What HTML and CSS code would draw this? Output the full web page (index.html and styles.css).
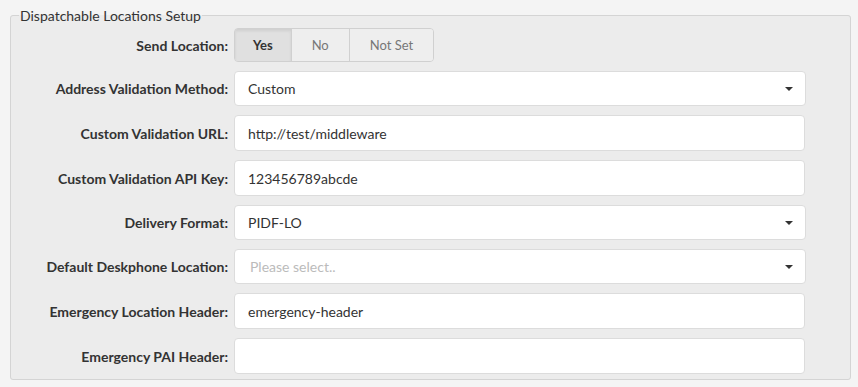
FILE: index.html
```html
<!DOCTYPE html>
<html lang="en">
<head>
    <meta charset="UTF-8">
    <meta name="viewport" content="width=device-width, initial-scale=1.0">
    <title>Dispatchable Locations Setup</title>
    <link rel="stylesheet" href="styles.css">
</head>
<body>
    <fieldset class="setup">
        <legend>Dispatchable Locations Setup</legend>

        <div class="form-row">
            <label>Send Location:</label>
            <div class="btn-group">
                <button type="button" class="btn active">Yes</button>
                <button type="button" class="btn">No</button>
                <button type="button" class="btn">Not Set</button>
            </div>
        </div>

        <div class="form-row">
            <label>Address Validation Method:</label>
            <div class="select">
                <span>Custom</span>
                <svg class="caret" width="8" height="4" viewBox="0 0 8 4"><path d="M0 0h8L4 4z"/></svg>
            </div>
        </div>

        <div class="form-row">
            <label for="url">Custom Validation URL:</label>
            <input type="text" id="url" class="text-input" value="http://test/middleware">
        </div>

        <div class="form-row">
            <label for="apikey">Custom Validation API Key:</label>
            <input type="text" id="apikey" class="text-input" value="123456789abcde">
        </div>

        <div class="form-row">
            <label>Delivery Format:</label>
            <div class="select">
                <span>PIDF-LO</span>
                <svg class="caret" width="8" height="4" viewBox="0 0 8 4"><path d="M0 0h8L4 4z"/></svg>
            </div>
        </div>

        <div class="form-row">
            <label>Default Deskphone Location:</label>
            <div class="select">
                <span class="placeholder">Please select..</span>
                <svg class="caret" width="8" height="4" viewBox="0 0 8 4"><path d="M0 0h8L4 4z"/></svg>
            </div>
        </div>

        <div class="form-row">
            <label for="elh">Emergency Location Header:</label>
            <input type="text" id="elh" class="text-input" value="emergency-header">
        </div>

        <div class="form-row">
            <label for="pai">Emergency PAI Header:</label>
            <input type="text" id="pai" class="text-input" value="">
        </div>
    </fieldset>
</body>
</html>
```

FILE: styles.css
```css
body {
    font-family: Lato, 'Noto Sans', sans-serif;
    background: #f4f4f4;
    color: #333;
    margin: 0;
    padding: 7px 7px 0 10px;
}

.setup {
    margin: 0;
    background: #ececec;
    border: 1px solid #d4d4d4;
    border-radius: 3px;
    padding: 4px 8px 5px 8px;
    display: flex;
    flex-direction: column;
    gap: 9px;
}

.setup legend {
    font-size: 14px;
    line-height: 17px;
    padding: 0 1px;
    color: #333;
}

.form-row {
    display: grid;
    grid-template-columns: 209px 572px;
    column-gap: 6px;
    align-items: center;
}

.form-row label {
    text-align: right;
    font-size: 14px;
    font-weight: bold;
    color: #333;
}

.btn-group {
    display: flex;
    height: 34px;
    width: max-content;
    border: 1px solid #d0d0d0;
    border-radius: 4px;
    overflow: hidden;
    box-sizing: border-box;
}

.btn {
    font-family: inherit;
    font-size: 13px;
    color: #777;
    background: #eeeeee;
    border: none;
    border-left: 1px solid #d0d0d0;
    padding: 0 20px;
    margin: 0;
}

.btn:first-child {
    border-left: none;
}

.btn.active {
    background: #e0e0e0;
    color: #333;
    font-weight: bold;
    padding: 0 18px;
    box-shadow: inset 0 2px 3px rgba(0,0,0,0.08);
}

.select,
.text-input {
    box-sizing: border-box;
    width: 100%;
    background: #fff;
    border: 1px solid #dcdcdc;
    border-radius: 4px;
    font-family: inherit;
    font-size: 14px;
    color: #333;
}

.select {
    height: 35px;
    display: flex;
    align-items: center;
    justify-content: space-between;
    padding: 0 12px 0 13px;
}

.text-input {
    height: 36px;
    width: 571px;
    padding: 0 13px;
    margin: 0;
    outline: none;
}

.placeholder {
    color: #bbb;
    padding-left: 2px;
}

.caret {
    fill: #333;
    display: block;
}
```
